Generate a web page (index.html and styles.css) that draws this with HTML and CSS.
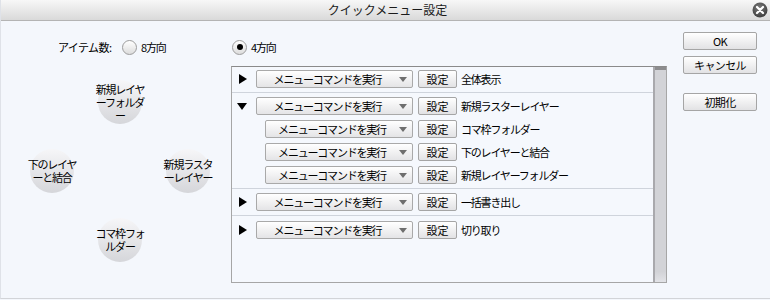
FILE: index.html
```html
<!DOCTYPE html>
<html lang="ja">
<head>
<meta charset="utf-8">
<title>クイックメニュー設定</title>
<link rel="stylesheet" href="styles.css">
</head>
<body>
<div class="window">
  <div class="titlebar">
    <span class="tb-spacer"></span>
    <span class="title">クイックメニュー設定</span>
    <span class="tb-end">
      <svg class="close" width="16" height="16" viewBox="0 0 16 16">
        <defs>
          <radialGradient id="cg" cx="45%" cy="35%" r="65%">
            <stop offset="0" stop-color="#7a7a7a"/>
            <stop offset="1" stop-color="#3e3e3e"/>
          </radialGradient>
        </defs>
        <circle cx="8" cy="8" r="7.5" fill="url(#cg)"/>
        <path d="M5 5 L11 11 M11 5 L5 11" stroke="#fff" stroke-width="2.2" stroke-linecap="round"/>
      </svg>
    </span>
  </div>
  <div class="body">
    <div class="main">
      <div class="count-row">
        <span class="count-label">アイテム数:</span>
        <span class="radio r8"><span class="radio-box"></span><span>8方向</span></span>
        <span class="radio"><span class="radio-box checked"></span><span>4方向</span></span>
      </div>
      <div class="lower">
        <div class="pie">
          <div class="cell"></div>
          <div class="cell"><div class="bubble"><span class="btext">新規レイヤ<br>ーフォルダ<br>ー</span></div></div>
          <div class="cell"></div>
          <div class="cell"><div class="bubble"><span class="btext">下のレイヤ<br>ーと結合</span></div></div>
          <div class="cell"></div>
          <div class="cell"><div class="bubble"><span class="btext">新規ラスタ<br>ーレイヤー</span></div></div>
          <div class="cell"></div>
          <div class="cell"><div class="bubble"><span class="btext">コマ枠フォ<br>ルダー</span></div></div>
          <div class="cell"></div>
        </div>
        <div class="listbox">
          <div class="rows">
            <div class="group first">
              <div class="row">
                <span class="twisty"><span class="tri-right"></span></span>
                <span class="select"><span class="sel-text">メニューコマンドを実行</span><span class="sel-arrow"></span></span>
                <span class="btn set">設定</span>
                <span class="name">全体表示</span>
              </div>
            </div>
            <div class="group">
              <div class="row">
                <span class="twisty"><span class="tri-down"></span></span>
                <span class="select"><span class="sel-text">メニューコマンドを実行</span><span class="sel-arrow"></span></span>
                <span class="btn set">設定</span>
                <span class="name">新規ラスターレイヤー</span>
              </div>
              <div class="row sub">
                <span class="select"><span class="sel-text">メニューコマンドを実行</span><span class="sel-arrow"></span></span>
                <span class="btn set">設定</span>
                <span class="name">コマ枠フォルダー</span>
              </div>
              <div class="row sub">
                <span class="select"><span class="sel-text">メニューコマンドを実行</span><span class="sel-arrow"></span></span>
                <span class="btn set">設定</span>
                <span class="name">下のレイヤーと結合</span>
              </div>
              <div class="row sub">
                <span class="select"><span class="sel-text">メニューコマンドを実行</span><span class="sel-arrow"></span></span>
                <span class="btn set">設定</span>
                <span class="name">新規レイヤーフォルダー</span>
              </div>
            </div>
            <div class="group">
              <div class="row">
                <span class="twisty"><span class="tri-right"></span></span>
                <span class="select"><span class="sel-text">メニューコマンドを実行</span><span class="sel-arrow"></span></span>
                <span class="btn set">設定</span>
                <span class="name">一括書き出し</span>
              </div>
            </div>
            <div class="group last">
              <div class="row">
                <span class="twisty"><span class="tri-right"></span></span>
                <span class="select"><span class="sel-text">メニューコマンドを実行</span><span class="sel-arrow"></span></span>
                <span class="btn set">設定</span>
                <span class="name">切り取り</span>
              </div>
            </div>
          </div>
          <div class="scrollbar"><div class="sb-cap"></div><div class="sb-thumb"></div></div>
        </div>
      </div>
    </div>
    <div class="side">
      <span class="btn side-btn">OK</span>
      <span class="btn side-btn">キャンセル</span>
      <span class="btn side-btn reset">初期化</span>
    </div>
  </div>
</div>
</body>
</html>
```

FILE: styles.css
```css
* { box-sizing: border-box; }
html, body { margin: 0; padding: 0; }
body {
  width: 770px;
  height: 300px;
  overflow: hidden;
  background: #f4f7fc;
  font-family: "Noto Sans CJK JP", "Noto Sans", sans-serif;
  font-size: 11px;
  letter-spacing: -1.2px;
  color: #000;
}
.window {
  width: 770px;
  height: 299px;
  display: flex;
  flex-direction: column;
  border-bottom: 1px solid #d2d4d8;
  border-left: 1px solid #dfe2e8;
}
.titlebar {
  height: 21px;
  flex: none;
  display: grid;
  grid-template-columns: 1fr auto 1fr;
  align-items: center;
  background: linear-gradient(#f7f7f7, #d9d9d9);
  border-bottom: 1px solid #b4b4b4;
}
.title {
  font-size: 12px;
  letter-spacing: 0;
  line-height: 20px;
  color: #1a1a1a;
  margin-left: 4px;
}
.tb-end {
  display: flex;
  justify-content: flex-end;
  padding-right: 2px;
}
.close { display: block; }
.body {
  flex: 1;
  display: flex;
}
.main {
  display: flex;
  flex-direction: column;
  padding-top: 18px;
}
.count-row {
  display: flex;
  align-items: center;
  height: 16px;
}
.count-label {
  width: 64px;
  margin-left: 57px;
  line-height: 16px;
  letter-spacing: -0.6px;
}
.radio {
  display: flex;
  align-items: center;
  gap: 4px;
  line-height: 16px;
}
.r8 { width: 110px; }
.radio-box {
  width: 15px;
  height: 15px;
  border-radius: 50%;
  border: 1px solid #9c9c9c;
  background: linear-gradient(#ffffff, #dcdcdc);
  display: flex;
  align-items: center;
  justify-content: center;
}
.radio-box.checked::after {
  content: "";
  width: 6px;
  height: 6px;
  border-radius: 50%;
  background: #000;
}
.lower {
  display: flex;
  margin-top: 11px;
}
.pie {
  width: 230px;
  display: grid;
  grid-template-columns: 44px 44px 44px;
  grid-template-rows: 44px 44px 44px;
  column-gap: 24px;
  row-gap: 25px;
  padding-left: 29px;
  padding-top: 14px;
  align-content: start;
}
.cell { width: 44px; height: 44px; }
.bubble {
  width: 44px;
  height: 44px;
  border-radius: 50%;
  background: linear-gradient(#f6f6f8, #d5d6da);
  display: flex;
  align-items: center;
  justify-content: center;
}
.btext {
  white-space: nowrap;
  text-align: center;
  line-height: 13px;
}
.listbox {
  width: 436px;
  height: 217px;
  border: 1px solid #a6a6a6;
  border-top-color: #8a8a8a;
  display: flex;
  background: #f5f8fd;
}
.rows {
  flex: 1;
  display: flex;
  flex-direction: column;
}
.group {
  display: flex;
  flex-direction: column;
  gap: 5px;
  padding: 4px 0 4px 0;
  border-bottom: 1px solid #cfd4dc;
}
.group.first { padding-top: 3px; }
.group.last { border-bottom: none; padding-top: 5px; }
.row {
  display: flex;
  align-items: center;
  height: 18px;
}
.row.sub { padding-left: 33px; }
.twisty {
  width: 19px;
  margin-right: 5px;
  display: flex;
  justify-content: center;
}
.tri-right {
  width: 0;
  height: 0;
  border-left: 8px solid #000;
  border-top: 5.5px solid transparent;
  border-bottom: 5.5px solid transparent;
  margin-left: 2px;
}
.tri-down {
  width: 0;
  height: 0;
  border-top: 7px solid #000;
  border-left: 5.5px solid transparent;
  border-right: 5.5px solid transparent;
}
.select {
  flex: none;
  width: 157px;
  height: 18px;
  border: 1px solid #a9a9a9;
  border-radius: 2px;
  background: linear-gradient(#ffffff, #e4e4e6);
  display: flex;
  align-items: center;
}
.row.sub .select { width: 148px; }
.sel-text {
  flex: 1;
  text-align: center;
  line-height: 16px;
  padding-left: 2px;
}
.sel-arrow {
  width: 16px;
  display: flex;
  justify-content: center;
  padding-right: 3px;
}
.sel-arrow::after {
  content: "";
  width: 0;
  height: 0;
  border-top: 5px solid #6e6e6e;
  border-left: 4.5px solid transparent;
  border-right: 4.5px solid transparent;
}
.btn {
  display: flex;
  align-items: center;
  justify-content: center;
  height: 18px;
  border: 1px solid #a5a5a5;
  border-radius: 2px;
  background: linear-gradient(#ffffff, #e2e2e4);
  line-height: 16px;
}
.set {
  width: 39px;
  margin-left: 5px;
  letter-spacing: 0;
}
.name {
  margin-left: 4px;
  white-space: nowrap;
  line-height: 16px;
}
.scrollbar {
  width: 13px;
  display: flex;
  flex-direction: column;
  border-left: 2px solid #a9a9ad;
}
.sb-cap {
  height: 3px;
  background: #8c8c8e;
}
.sb-thumb {
  flex: 1;
  background: linear-gradient(#d2d3d7, #d2d3d7 95%, #e2e3e7);
}
.side {
  display: flex;
  flex-direction: column;
  margin-left: 16px;
  padding-top: 11px;
  gap: 6px;
}
.side-btn {
  width: 74px;
  letter-spacing: -0.6px;
}
.reset { margin-top: 13px; }
```
